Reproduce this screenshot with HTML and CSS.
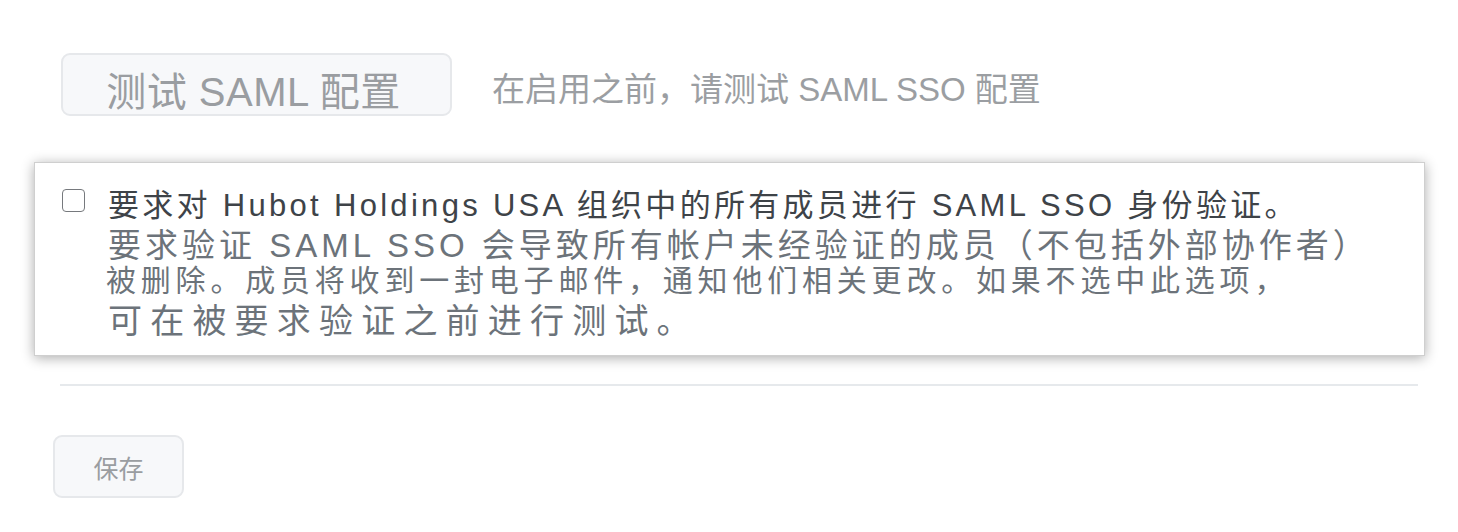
FILE: index.html
```html
<!DOCTYPE html>
<html lang="zh-CN">
<head>
<meta charset="utf-8">
<link rel="stylesheet" href="styles.css">
</head>
<body>
<div class="page">
  <div class="test-row">
    <button class="btn btn-test">测试 SAML 配置</button>
    <span class="hint">在启用之前，请测试 SAML SSO 配置</span>
  </div>
  <div class="card">
    <span class="checkbox"></span>
    <div class="text">
      <div class="line l1">要求对 Hubot Holdings USA 组织中的所有成员进行 SAML SSO 身份验证。</div>
      <div class="line l2">要求验证 SAML SSO 会导致所有帐户未经验证的成员（不包括外部协作者）</div>
      <div class="line l3">被删除。成员将收到一封电子邮件，通知他们相关更改。如果不选中此选项，</div>
      <div class="line l4">可在被要求验证之前进行测试。</div>
    </div>
  </div>
  <hr class="divider">
  <button class="btn btn-save">保存</button>
</div>
</body>
</html>
```
FILE: styles.css
```css
html, body {
  margin: 0;
  padding: 0;
  background: #ffffff;
}
body {
  font-family: "Liberation Sans", "Noto Sans CJK SC", sans-serif;
}
.page {
  padding: 53px 40px 0 61px;
}
.test-row {
  display: flex;
  align-items: center;
  gap: 40px;
}
.btn {
  font-family: "Liberation Sans", "Noto Sans CJK SC", sans-serif;
  background: #f7f8fa;
  border: 2px solid #e6e8eb;
  border-radius: 9px;
  color: #9a9da1;
  padding: 0;
  cursor: pointer;
}
.btn-test {
  width: 391px;
  height: 63px;
  font-size: 40px;
  line-height: 1;
  padding-top: 14px;
  padding-right: 6px;
  letter-spacing: 0.5px;
  white-space: nowrap;
}
.hint {
  font-size: 33px;
  color: #9b9ea2;
  margin-top: 4px;
  white-space: nowrap;
}
.card {
  display: flex;
  align-items: flex-start;
  margin: 46px 0 0 -27px;
  width: 1391px;
  height: 194px;
  box-sizing: border-box;
  background: #fff;
  border: 1px solid #cfcfcf;
  box-shadow: 0 2px 12px rgba(0,0,0,0.33);
  padding: 26px 0 0 27px;
}
.checkbox {
  flex: none;
  width: 21px;
  height: 21px;
  border: 1.5px solid #76797d;
  border-radius: 4px;
  background: #fff;
}
.text {
  margin-left: 23px;
  margin-top: 2px;
}
.line {
  white-space: nowrap;
}
.l1 {
  font-size: 31px;
  line-height: 36px;
  color: #3e4348;
  letter-spacing: 3.3px;
  margin-top: -3px;
}
.l2 {
  font-size: 33px;
  line-height: 40px;
  color: #6c737a;
  letter-spacing: 4px;
  margin-top: 2px;
}
.l3 {
  font-size: 30px;
  line-height: 36px;
  color: #6c737a;
  letter-spacing: 4.8px;
  margin-left: -2px;
  margin-top: -3px;
}
.l4 {
  font-size: 34px;
  line-height: 40px;
  color: #6c737a;
  letter-spacing: 8.2px;
  margin-top: 2px;
}
.divider {
  border: none;
  border-top: 2px solid #e6e9ec;
  margin: 28px 0 0 -1px;
  width: 1358px;
}
.btn-save {
  display: block;
  margin: 49px 0 0 -8px;
  width: 131px;
  height: 63px;
  font-size: 25px;
}
```
